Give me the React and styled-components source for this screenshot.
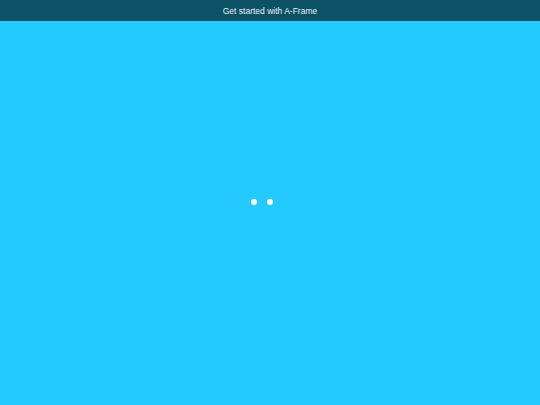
import styled, { createGlobalStyle } from "styled-components";

const GlobalStyle = createGlobalStyle`
  html, body {
    margin: 0;
    padding: 0;
    height: 100%;
  }
  body {
    background: #24c9ff;
    font-family: "Liberation Sans", Arial, sans-serif;
  }
  #root {
    height: 100%;
  }
`;

const Page = styled.div`
  display: flex;
  flex-direction: column;
  height: 100vh;
  background: #24c9ff;
`;

const TopBar = styled.div`
  height: 21px;
  background: #0d5166;
  color: #e6f2f5;
  font-size: 8.5px;
  display: flex;
  align-items: center;
  justify-content: center;
`;

const Stage = styled.div`
  flex: 1;
  display: flex;
  align-items: center;
  justify-content: center;
  gap: 10px;
  padding: 0 16px 22px 0;
`;

const Dot = styled.span`
  flex-shrink: 0;
  width: 6px;
  height: 6px;
  border-radius: 50%;
  background: #ffffff;
`;

const App = () => {
  return (
    <Page>
      <GlobalStyle />
      <TopBar>Get started with A-Frame</TopBar>
      <Stage>
        <Dot />
        <Dot />
      </Stage>
    </Page>
  );
};

export default App;
